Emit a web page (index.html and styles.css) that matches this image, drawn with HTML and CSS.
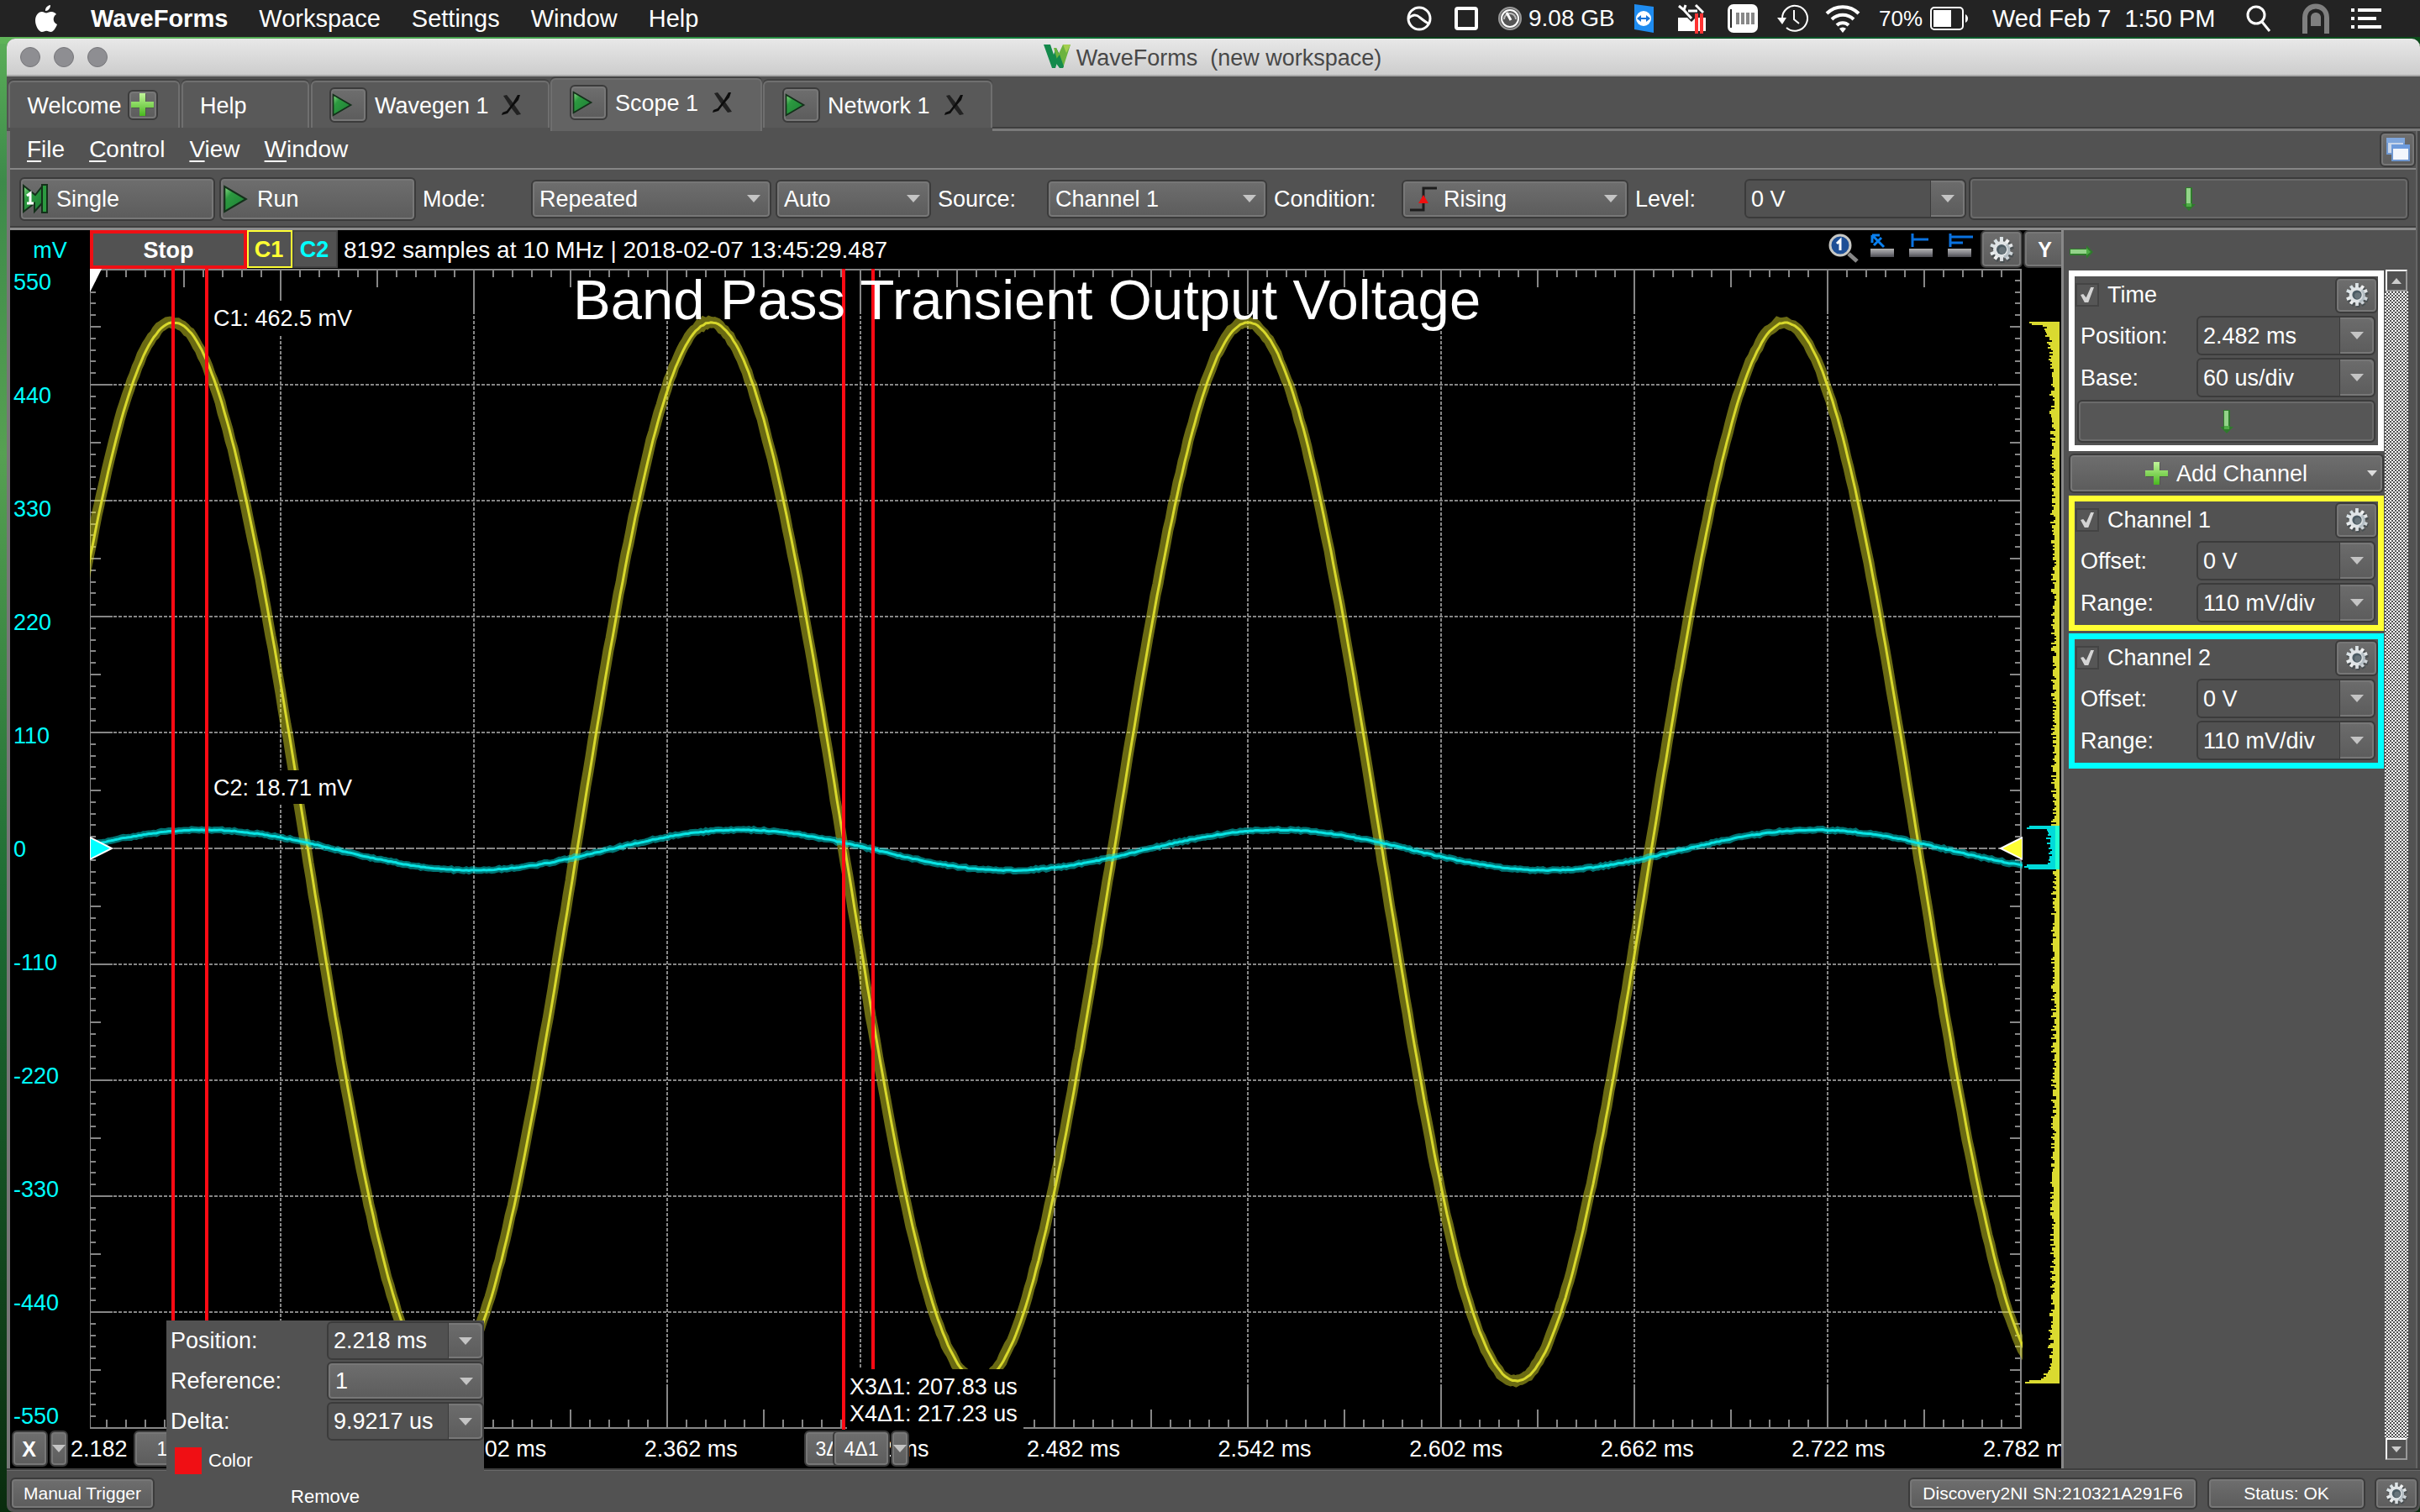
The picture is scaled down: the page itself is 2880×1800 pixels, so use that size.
FILE: index.html
```html
<!DOCTYPE html>
<html lang="en">
<head>
<meta charset="utf-8">
<title>WaveForms (new workspace)</title>
<link rel="stylesheet" href="styles.css">
</head>
<body>
<svg class="defs" aria-hidden="true">
  <defs>
    <linearGradient id="leaf" x1="0" y1="0" x2="1" y2="1"><stop offset="0" stop-color="#8ee08a"/><stop offset=".3" stop-color="#2c9a40"/><stop offset="1" stop-color="#1c7c34"/></linearGradient>
    <linearGradient id="plusfill" x1="0" y1="0" x2="0" y2="1"><stop offset="0" stop-color="#c2f59a"/><stop offset="1" stop-color="#49b81f"/></linearGradient>
    <linearGradient id="steel" x1="0" y1="0" x2="1" y2="1"><stop offset="0" stop-color="#c4d4da"/><stop offset=".5" stop-color="#f4f4f4"/><stop offset="1" stop-color="#b8c2c8"/></linearGradient>
    <linearGradient id="ruler" x1="0" y1="0" x2="0" y2="1"><stop offset="0" stop-color="#b4b4b4"/><stop offset=".5" stop-color="#85858a"/><stop offset="1" stop-color="#4c4c52"/></linearGradient>
    <symbol id="gear" viewBox="0 0 32 32">
      <g transform="translate(1 2)" stroke="#3a4448" stroke-width="5" opacity=".6"><path d="M15.900 2L16.100 30M3 10.500L29 21.500M3 21.500L29 10.500M8 4.500L24 27.500M24 4.500L8 27.500"/></g>
      <g stroke="url(#steel)" stroke-width="4"><path d="M15.900 1L16.100 30M3 10.500L29 21.500M3 21.500L29 10.500M8 4.500L24 27.500M24 4.500L8 27.500"/></g>
      <circle cx="16" cy="16" r="10" fill="#e0e4e6"/><path d="M22 10a9 9 0 0 1-3 15" fill="none" stroke="#b4bec4" stroke-width="3"/><circle cx="16" cy="16" r="6" fill="#4c5c64"/><circle cx="17" cy="17" r="4" fill="#68747a"/>
    </symbol>
    <symbol id="play" viewBox="0 0 28 32"><path d="M2 2v28L26 16z" fill="url(#leaf)" stroke="#14301a" stroke-width="2"/></symbol>
    <symbol id="plus" viewBox="0 0 28 28"><path d="M11 1h7v10h9v7h-9v9h-7v-9H1v-7h10z" fill="#3c4c34" opacity=".5"/><path d="M10 0h7v10h10v7H17v10h-7V17H0v-7h10z" fill="url(#plusfill)"/></symbol>
    <symbol id="close" viewBox="0 0 26 26"><path d="M3 2l4-1 8 10 9 13-5 1-7-9z" fill="#222"/><path d="M20 1h3l-2 6-7 8-6 8-7 2 1-3 5-2 7-9z" fill="#0c0c0c"/></symbol>
    <symbol id="down" viewBox="0 0 16 28"><path d="M4 0h8v20h4l-8 8-8-8h4z" fill="#2f7a2c"/><path d="M5 1h5v19H5z" fill="#93d389"/><path d="M5 19h6v4H5z" fill="#4fae46"/></symbol>
    <symbol id="right" viewBox="0 0 28 16"><path d="M0 4h20V0l8 8-8 8v-4H0z" fill="#2f7a2c"/><path d="M1 5h19v5H1z" fill="#93d389"/><path d="M20 3l5 5-5 4z" fill="#4fae46"/></symbol>
  </defs>
</svg>

<header class="menubar">
  <nav class="menus" aria-label="Application">
    <a href="#" class="apple" aria-label="Apple"><svg width="26" height="32" viewBox="0 0 26 32" fill="#fff"><path d="M18 0c.3 3.600-2.700 7.200-6 7 -.4-3.400 2.700-6.700 6-7zM13 9.500c1.700 0 3.300-1.700 6.300-1.600 2.400.1 4.500 1.300 5.700 3.100-5 3-4 10.200 1 12C24.300 27.600 21.500 32 18.500 32c-2.100 0-2.800-1.300-5.200-1.300S9.900 32 8 32C4.300 32 0 24.900 0 18.500 0 12.300 3.700 8.200 7.800 8.100c2.300 0 3.700 1.400 5.200 1.400z"/></svg></a>
    <a href="#" class="app">WaveForms</a><a href="#">Workspace</a><a href="#">Settings</a><a href="#">Window</a><a href="#">Help</a>
  </nav>
  <div class="tray">
    <svg class="t1" width="30" height="30" viewBox="0 0 30 30" fill="none" stroke="#fff" stroke-width="3"><circle cx="15" cy="15" r="13"/><path d="M2 15c5-5 10-5 14-1 4 3 6 5 10 7"/></svg>
    <svg class="t2" width="28" height="28" viewBox="0 0 28 28" fill="none" stroke="#fff" stroke-width="4"><rect x="2" y="2" width="24" height="24" rx="2"/></svg>
    <svg class="t3" width="28" height="28" viewBox="0 0 28 28" fill="none"><circle cx="14" cy="14" r="13" fill="#555" stroke="#999" stroke-width="2"/><circle cx="14" cy="14" r="10" stroke="#fff" stroke-width="2"/><path d="M7 15a7 7 0 0 1 14 0" stroke="#bbb" stroke-width="2"/><path d="M10 7l5 9" stroke="#fff" stroke-width="3"/></svg>
    <span class="t4">9.08 GB</span>
    <svg class="t5" width="26" height="34" viewBox="0 0 26 34"><path d="M1 0l23 3v31L1 30z" fill="#1f8cf0"/><circle cx="12" cy="17" r="9" fill="#fff"/><path d="M4 17l5-4v3h6v-3l5 4-5 4v-3H9v3z" fill="#1673d8"/></svg>
    <svg class="t6" width="34" height="36" viewBox="0 0 34 36" fill="#fff"><path d="M1 17h11l5 5 5-5h12v16H1z"/><path d="M2 3l6 5 2-6M8 8l9 10M13 9h11M22 2l9 9" stroke="#fff" stroke-width="3" fill="none"/><path d="M21 12h4v24h-4zM27 12h4v24h-4z" fill="#f33"/></svg>
    <svg class="t7" width="38" height="34" viewBox="0 0 38 34"><rect x="1" y="0" width="36" height="34" rx="7" fill="#fff"/><path d="M5 6v22" stroke="#222" stroke-width="2"/><path d="M13 10v14M19 10v14M25 10v14M31 10v14" stroke="#888" stroke-width="4"/></svg>
    <svg class="t8" width="38" height="36" viewBox="0 0 38 36" fill="none" stroke="#fff" stroke-width="2"><path d="M7 18a15 15 0 1 1 5 11M21 8v11l6 5"/><path d="M1 17h11l-5 8z" fill="#fff" stroke="none"/></svg>
    <svg class="t9" width="42" height="34" viewBox="0 0 42 34" fill="none" stroke="#fff" stroke-width="4"><path d="M2 11a27 27 0 0 1 38 0M8 18a19 19 0 0 1 26 0M14 25a10 10 0 0 1 14 0"/><path d="M17 29l4 5 4-5a6 6 0 0 0-8 0z" fill="#fff" stroke="none"/></svg>
    <span class="t10">70%</span>
    <svg class="t11" width="46" height="28" viewBox="0 0 46 28"><rect x="1" y="1" width="38" height="26" rx="4" fill="none" stroke="#fff" stroke-width="2"/><path d="M4 4h21v20H4z" fill="#fff"/><path d="M42 9c4 2 4 8 0 10z" fill="#fff"/></svg>
    <time class="t12">Wed Feb 7&nbsp; 1:50 PM</time>
    <svg class="t13" width="30" height="32" viewBox="0 0 30 32" fill="none" stroke="#fff" stroke-width="3"><circle cx="12" cy="12" r="10"/><path d="M19 20l9 11"/></svg>
    <svg class="t14" width="32" height="36" viewBox="0 0 32 36" fill="none"><path d="M3 36V17C3-1 29-1 29 17v19" stroke="#7f7f7f" stroke-width="6"/><path d="M10 27V17c0-8 12-8 12 0v10z" fill="#7f7f7f"/></svg>
    <svg class="t15" width="36" height="24" viewBox="0 0 36 24" stroke="#fff" stroke-width="4"><path d="M0 2h4M8 2h28M0 12h4M8 12h22M0 22h4M8 22h28"/></svg>
  </div>
</header>

<main class="window">
  <div class="titlebar">
    <div class="lights"><i></i><i></i><i></i></div>
    <h1><svg width="32" height="28" viewBox="0 0 32 28"><path d="M0 0h8l4 12 3-8 4 8-5 16h-4z" fill="#148a4c"/><path d="M15 4l3 7 5-11h9l-9 28h-4L12 4z" fill="#6cb33e"/><path d="M13 20l6-8 5 14-1 2h-4z" fill="#148a4c"/><path d="M23 0h9l-5 10z" fill="#a4cf50"/></svg>WaveForms&nbsp; (new workspace)</h1>
  </div>

  <div class="tabs">
    <div class="tab welcome"><button class="plain">Welcome</button><button class="btn sq" aria-label="Add instrument"><svg width="28" height="28"><use href="#plus"/></svg></button></div>
    <div class="tab help"><button class="plain">Help</button></div>
    <div class="tab wavegen"><button class="btn run" aria-label="Run Wavegen"><svg width="26" height="28"><use href="#play"/></svg></button><button class="plain">Wavegen 1</button><button class="x" aria-label="Close Wavegen"><svg width="26" height="26"><use href="#close"/></svg></button></div>
    <div class="tab scope active"><button class="btn run" aria-label="Run Scope"><svg width="26" height="28"><use href="#play"/></svg></button><button class="plain">Scope 1</button><button class="x" aria-label="Close Scope"><svg width="26" height="26"><use href="#close"/></svg></button></div>
    <div class="tab network"><button class="btn run" aria-label="Run Network"><svg width="26" height="28"><use href="#play"/></svg></button><button class="plain">Network 1</button><button class="x" aria-label="Close Network"><svg width="26" height="26"><use href="#close"/></svg></button></div>
    <div class="tabrest"></div>
  </div>

  <div class="pane">
    <nav class="submenu" aria-label="Scope">
      <a href="#"><u>F</u>ile</a><a href="#"><u>C</u>ontrol</a><a href="#"><u>V</u>iew</a><a href="#"><u>W</u>indow</a>
      <button class="btn undock" aria-label="Undock"><svg width="28" height="28" viewBox="0 0 28 28"><rect x="1" y="1" width="20" height="18" fill="#c9d6ea" stroke="#6f97cf" stroke-width="2"/><path d="M0 0h22v6H0z" fill="#7fa6dc"/><rect x="7" y="9" width="20" height="18" fill="#f2f6fc" stroke="#6f97cf" stroke-width="2"/><path d="M6 8h22v5H6z" fill="#6d9bdc"/></svg></button>
    </nav>

    <div class="toolbar">
      <button class="btn single"><svg width="30" height="36" viewBox="0 0 30 36"><path d="M1 2v31l13-10v10l9-10V3l-8 10z" fill="url(#leaf)" stroke="#14301a" stroke-width="2"/><path d="M23 1h6v33h-6z" fill="#2c9a40" stroke="#14301a" stroke-width="2"/><path d="M5 14l4-3v12M5 23h8" stroke="#fff" stroke-width="3" fill="none"/></svg>Single</button>
      <button class="btn runall"><svg width="30" height="34"><use href="#play"/></svg>Run</button>
      <label class="l1" for="mode">Mode:</label>
      <span class="select w1"><select id="mode"><option>Repeated</option></select></span>
      <span class="select w2"><select aria-label="Trigger mode"><option>Auto</option></select></span>
      <label class="l2" for="source">Source:</label>
      <span class="select w3"><select id="source"><option>Channel 1</option></select></span>
      <label class="l3" for="cond">Condition:</label>
      <span class="select w4"><svg class="edge" width="32" height="32" viewBox="0 0 32 32"><path d="M0 29h16V3h16" fill="none" stroke="#1c1c1c" stroke-width="3"/><path d="M16 11l6 10H10z" fill="#f01010"/></svg><select id="cond"><option>Rising</option></select></span>
      <label class="l4" for="level">Level:</label>
      <span class="combo w5"><input id="level" value="0 V"><button aria-label="Level values"></button></span>
      <button class="slider" aria-label="Adjust level"><svg width="16" height="28"><use href="#down"/></svg></button>
    </div>

    <div class="work">
      <section class="plot">
        <div class="unit">mV</div>
        <div class="plothead">
          <div class="state">Stop</div><button class="chan c1">C1</button><button class="chan c2">C2</button>
          <div class="info">8192 samples at 10 MHz | 2018-02-07 13:45:29.487</div>
          <div class="tools">
            <svg width="36" height="36" viewBox="0 0 36 36"><path d="M24 24l10 9" stroke="#888" stroke-width="5"/><circle cx="14" cy="14" r="12" fill="#1e4f96" stroke="#c8c8c4" stroke-width="3"/><path d="M10 12l4-4v12" stroke="#fff" stroke-width="3" fill="none"/></svg>
            <svg width="30" height="28" viewBox="0 0 30 28"><path d="M4 3l13 13M3 2h9M3 2v9M14 5l-9 9" stroke="#0a80f0" stroke-width="3"/><path d="M1 18h28v10H1z" fill="url(#ruler)"/></svg>
            <svg width="30" height="28" viewBox="0 0 30 28"><path d="M5 0v16M5 7h19" stroke="#0a72e0" stroke-width="3"/><path d="M1 18h28v10H1z" fill="url(#ruler)"/></svg>
            <svg width="32" height="28" viewBox="0 0 32 28"><path d="M4 0v16M4 4h27M4 11h15" stroke="#0a72e0" stroke-width="3"/><path d="M1 18h28v10H1z" fill="url(#ruler)"/></svg>
          </div>
          <button class="btn plotgear" aria-label="Plot options"><svg width="32" height="34"><use href="#gear"/></svg></button>
        </div>
        <button class="btn ybtn">Y</button>

        <div class="yaxis"><span>550</span><span>440</span><span>330</span><span>220</span><span>110</span><span>0</span><span>-110</span><span>-220</span><span>-330</span><span>-440</span><span>-550</span></div>
        <div class="graph" id="graph">
          <h2 class="caption">Band Pass Transient Output Voltage</h2>
          <div class="note n1">C1: 462.5 mV</div>
          <div class="note n2">C2: 18.71 mV</div>
          <div class="note n3">X3Δ1: 207.83 us<br>X4Δ1: 217.23 us</div>
        </div>
        <div class="hist" id="hist"></div>

        <div class="xaxis">
          <div class="ticks"><span>2.182 ms</span><span>2.242 ms</span><span>2.302 ms</span><span>2.362 ms</span><span>2.422 ms</span><span>2.482 ms</span><span>2.542 ms</span><span>2.602 ms</span><span>2.662 ms</span><span>2.722 ms</span><span>2.782 ms</span></div>
          <button class="btn xb">X</button><button class="btn drop xd" aria-label="Add X cursor"></button>
          <button class="btn cur k1">1</button><button class="btn cur k3">3Δ1</button><button class="btn cur k4">4Δ1</button><button class="btn drop kd" aria-label="Cursor options"></button>
        </div>
      </section>

      <aside class="side">
        <div class="sidehead"><svg width="28" height="16"><use href="#right"/></svg></div>
        <div class="sidebody">
          <div class="panels">
            <fieldset class="box time">
              <div class="boxhead"><label><input type="checkbox" checked>Time</label><button class="btn gearbtn" aria-label="Time options"><svg width="30" height="32"><use href="#gear"/></svg></button></div>
              <div class="row"><label for="tp">Position:</label><span class="combo"><input id="tp" value="2.482 ms"><button aria-label="Position values"></button></span></div>
              <div class="row"><label for="tb">Base:</label><span class="combo"><input id="tb" value="60 us/div"><button aria-label="Base values"></button></span></div>
              <button class="slider" aria-label="Adjust time"><svg width="16" height="28"><use href="#down"/></svg></button>
            </fieldset>
            <button class="btn addch"><svg width="28" height="28"><use href="#plus"/></svg>Add Channel</button>
            <fieldset class="box ch1">
              <div class="boxhead"><label><input type="checkbox" checked>Channel 1</label><button class="btn gearbtn" aria-label="Channel 1 options"><svg width="30" height="32"><use href="#gear"/></svg></button></div>
              <div class="row"><label for="o1">Offset:</label><span class="combo"><input id="o1" value="0 V"><button aria-label="Offset values"></button></span></div>
              <div class="row"><label for="r1">Range:</label><span class="combo"><input id="r1" value="110 mV/div"><button aria-label="Range values"></button></span></div>
            </fieldset>
            <fieldset class="box ch2">
              <div class="boxhead"><label><input type="checkbox" checked>Channel 2</label><button class="btn gearbtn" aria-label="Channel 2 options"><svg width="30" height="32"><use href="#gear"/></svg></button></div>
              <div class="row"><label for="o2">Offset:</label><span class="combo"><input id="o2" value="0 V"><button aria-label="Offset values"></button></span></div>
              <div class="row"><label for="r2">Range:</label><span class="combo"><input id="r2" value="110 mV/div"><button aria-label="Range values"></button></span></div>
            </fieldset>
          </div>
          <div class="scroll"><button class="up" aria-label="Scroll up"></button><div class="track"></div><button class="dn" aria-label="Scroll down"></button></div>
        </div>
      </aside>
    </div>
  </div>

  <footer class="status">
    <button class="btn manual">Manual Trigger</button>
    <button class="btn device">Discovery2NI SN:210321A291F6</button>
    <button class="btn ok">Status: OK</button>
    <button class="btn sgear" aria-label="Device options"><svg width="28" height="30"><use href="#gear"/></svg></button>
  </footer>

  <div class="popup">
    <div class="row"><label for="cp">Position:</label><span class="combo"><input id="cp" value="2.218 ms"><button aria-label="Position values"></button></span></div>
    <div class="row"><label for="cr">Reference:</label><span class="select"><select id="cr"><option>1</option></select></span></div>
    <div class="row"><label for="cd">Delta:</label><span class="combo"><input id="cd" value="9.9217 us"><button aria-label="Delta values"></button></span></div>
    <button class="color"><i></i>Color</button>
    <button class="remove">Remove</button>
  </div>
</main>
<script src="plot.js"></script>
</body>
</html>
```
FILE: styles.css
```css
* { box-sizing: border-box; }
body {
  margin: 0; height: 100vh; display: flex; flex-direction: column; overflow: hidden;
  font: 27px/32px "Liberation Sans", Arial, sans-serif; color: #fff;
  background:
    linear-gradient(90deg, #5fb458, #3d9a4a 25%, #0c7a38 40%, #073a18 60%, #0a5a2c 80%, #0c4a1a) 0 44px / 100% 8px no-repeat,
    linear-gradient(#63b85c, #3d8a4a 12%, #56a052 30%, #1d6b33 60%, #0a2c0e);
}
button, input, select { font: inherit; color: inherit; margin: 0; padding: 0; border: 0; background: none; border-radius: 0; outline: 0; }
button { display: flex; align-items: center; justify-content: center; white-space: nowrap; }
a { color: inherit; text-decoration: none; }
svg { display: block; flex: none; }
.defs { position: absolute; width: 0; height: 0; }

.menubar { height: 44px; flex: none; background: #232323; display: flex; justify-content: space-between; align-items: center; font-size: 29px; }
.menus { display: flex; gap: 37px; padding-left: 42px; align-items: center; }
.menus .app { font-weight: bold; margin-left: 3px; }
.tray { display: flex; align-items: center; padding-right: 46px; font-size: 28px; white-space: nowrap; }
.t2 { margin-left: 27px; } .t3 { margin-left: 24px; } .t4 { margin-left: 8px; width: 100px; }
.t5 { margin-left: 25px; } .t6 { margin-left: 26px; } .t7 { margin-left: 25px; } .t8 { margin-left: 21px; }
.t9 { margin-left: 20px; } .t10 { margin-left: 22px; font-size: 26px; width: 54px; } .t11 { margin-left: 7px; }
.t12 { margin-left: 28px; width: 266px; font-size: 29px; } .t13 { margin-left: 36px; } .t14 { margin-left: 37px; } .t15 { margin-left: 26px; }

.window { position: relative; flex: 1; min-height: 0; margin: 2px 0 0 8px; background: #525252; border-radius: 10px 10px 8px 8px; display: flex; flex-direction: column; }
.titlebar { height: 45px; flex: none; position: relative; display: flex; align-items: center; background: linear-gradient(#e8e8e8, #cdcdcd); border-bottom: 2px solid #a8a8a8; border-radius: 10px 10px 0 0; }
.lights { position: absolute; left: 16px; display: flex; gap: 16px; }
.lights i { width: 24px; height: 24px; border-radius: 50%; background: #8e8e92; border: 1px solid #77777b; }
h1 { margin: 0 auto; font-size: 27px; font-weight: normal; color: #484848; display: flex; gap: 7px; padding: 2px 2px 0 0; }

.btn { border: 2px solid #3b3b3b; border-radius: 6px; background: linear-gradient(#6e6e6e, #5c5c5c); box-shadow: inset 0 0 0 2px #777; }
.tabs { flex: none; height: 65px; display: flex; align-items: flex-end; padding-left: 2px; }
.tab { height: 56px; margin-bottom: 4px; border: 2px solid #6f6f6f; border-bottom: 0; border-radius: 6px 6px 0 0; background: #595959; display: flex; align-items: center; box-shadow: 0 -2px 0 #424242; }
.tab.active { height: 63px; margin-bottom: 0; background: #636363; padding-bottom: 8px; }
.tab .plain { margin-left: 9px; padding-top: 2px; }
.welcome { width: 204px; margin-right: 2px; } .tab.welcome .plain { margin-left: 19px; width: 115px; }
.help { width: 152px; margin-right: 2px; } .tab.help .plain { margin-left: 20px; }
.wavegen { width: 284px; margin-right: 1px; padding-left: 20px; } .wavegen .x { margin-left: 14px; }
.scope { width: 252px; margin-right: 1px; padding-left: 21px; } .scope .x { margin-left: 16px; }
.network { width: 273px; padding-left: 21px; } .network .x { margin-left: 16px; }
.btn.sq { width: 36px; height: 36px; margin-left: 6px; }
.btn.run { width: 45px; height: 42px; justify-content: flex-start; }
.tabrest { flex: 1; height: 5px; border-top: 2px solid #3e3e3e; border-bottom: 3px solid #7a7a7a; }

.pane { flex: 1; min-height: 0; display: flex; flex-direction: column; border-left: 4px solid #777; border-right: 3px solid #444; box-shadow: inset -2px 0 #666; }
.submenu { flex: none; height: 46px; display: flex; align-items: center; gap: 29px; padding: 0 0 0 20px; border-bottom: 2px solid #858585; margin-right: 2px; font-size: 28px; }
.submenu u { text-decoration-thickness: 2px; text-underline-offset: 4px; }
.undock { margin-left: auto; width: 43px; height: 42px; }
.toolbar { flex: none; height: 72px; display: flex; align-items: center; padding: 0 8px 0 11px; border-bottom: 3px solid #8c8c8c; box-shadow: inset 0 -2px #3e3e3e; margin-right: 2px; }
.single, .runall { width: 233px; height: 52px; justify-content: flex-start; gap: 10px; padding-left: 2px; margin-right: 5px; }
.runall { width: 234px; margin-right: 0; gap: 11px; }
.toolbar label { padding-left: 8px; flex: none; }
.l1 { width: 137px; } .l2 { width: 138px; } .l3 { width: 160px; } .l4 { width: 138px; }
.toolbar .w1 { width: 286px; margin-right: 5px; } .toolbar .w2 { width: 185px; } .toolbar .w3 { width: 262px; } .toolbar .w4 { width: 270px; } .toolbar .w5 { width: 264px; margin-right: 3px; }
.toolbar .slider { flex: 1; }

.select { position: relative; flex: none; display: flex; align-items: center; height: 46px; border: 2px solid #3b3b3b; border-radius: 6px; background: linear-gradient(#6e6e6e, #5c5c5c); box-shadow: inset 0 0 0 2px #777; }
.select select { flex: 1; min-width: 0; appearance: none; padding-left: 8px; height: 42px; }
.select::after { content: ""; margin-right: 11px; border: 8px solid transparent; border-top: 9px solid #c4c4c4; border-bottom: 0; }
.edge { margin-left: 8px; }
.combo { flex: none; display: flex; height: 47px; border: 2px solid #3b3b3b; border-radius: 6px; background: #515151; }
.combo input { flex: 1; min-width: 0; width: 0; padding: 0 0 0 6px; }
.combo button { width: 41px; border-left: 1px solid #3b3b3b; border-radius: 0 5px 5px 0; background: linear-gradient(#6c6c6c, #5c5c5c); box-shadow: inset -2px 2px #777, inset 0 -2px #777; }
.combo button::after, .drop::after { content: ""; border: 8px solid transparent; border-top: 9px solid #c4c4c4; border-bottom: 0; }
.slider { height: 51px; border: 2px solid #3b3b3b; border-radius: 6px; background: #565656; box-shadow: inset 0 0 0 2px #6a6a6a; }

.work { flex: 1; min-height: 0; display: flex; }
.plot { flex: 1; min-width: 0; overflow: hidden; background: #000; display: grid; grid-template: 46px minmax(0, 1fr) 46px / 95px minmax(0, 1fr) 46px; }
.unit { color: #0ff; text-align: center; line-height: 48px; padding: 0 12px 0 12px; }
.plothead { display: flex; align-items: stretch; }
.state { width: 187px; border: 4px solid #f00f14; background: #525252; font-weight: bold; text-align: center; line-height: 40px; }
.chan { width: 54px; background: #525252; font-weight: bold; margin-bottom: 1px; padding-right: 2px; }
.c1 { color: #ff3; border: 2px solid #ff3; } .c2 { color: #0ff; border: 2px solid #444; }
.info { margin-left: 7px; font-size: 28px; line-height: 48px; white-space: nowrap; }
.tools { margin-left: auto; display: flex; gap: 16px; align-items: flex-start; padding-top: 4px; margin-right: 8px; }
.tools svg:first-child { margin-right: -3px; }
.plotgear { width: 50px; margin-bottom: 1px; }
.ybtn { font-weight: bold; margin: 0 -6px 1px 1px; font-size: 25px; }
.yaxis { color: #0ff; display: flex; flex-direction: column; justify-content: space-between; padding-left: 4px; }
.graph { position: relative; overflow: hidden; }
.graph svg, .hist svg { position: absolute; left: 0; top: 0; width: 100%; height: 100%; }
.hist { position: relative; }
.caption { position: absolute; z-index: 1; left: 25%; top: 0; margin: 0; font-size: 67px; line-height: 74px; font-weight: normal; white-space: nowrap; }
.note { position: absolute; z-index: 1; background: #000; white-space: nowrap; }
.n1, .n2 { left: 141px; padding: 5px 4px 3px 6px; width: 184px; height: 40px; }
.n1 { top: 38px; } .n2 { top: 597px; }
.n3 { left: 901px; bottom: 0; width: 210px; height: 72px; padding: 5px 0 3px 3px; }
.xaxis { grid-column: 1 / -1; position: relative; }
.ticks { display: flex; justify-content: space-between; margin: 0 -18px 0 72px; line-height: 46px; white-space: nowrap; }
.xaxis .btn { position: absolute; top: 1px; height: 43px; }
.xaxis .xb { left: 2px; width: 43px; font-weight: bold; font-size: 25px; padding-right: 2px; }
.xaxis .drop { width: 22px; } .xaxis .xd { left: 47px; } .xaxis .kd { left: 1048px; }
.cur { font-size: 23px; width: 68px; }
.xaxis .k1 { left: 147px; } .xaxis .k3 { left: 945px; } .xaxis .k4 { left: 979px; }

.side { width: 424px; flex: none; border-left: 3px solid #888; display: flex; flex-direction: column; }
.sidehead { height: 47px; padding: 18px 0 0 7px; flex: none; }
.sidebody { flex: 1; min-height: 0; display: flex; justify-content: space-between; padding: 0 11px 10px 6px; gap: 1px; }
.panels { flex: 1; display: flex; flex-direction: column; gap: 3px; padding-top: 1px; }
.box { margin: 0; min-width: 0; border: 7px solid #fff; padding: 0 3px 3px 1px; display: flex; flex-direction: column; gap: 3px; }
.ch1 { border-color: #ff3; } .ch2 { border-color: #0ff; }
.boxhead { height: 44px; display: flex; align-items: center; justify-content: space-between; margin-right: -3px; }
.boxhead label { display: flex; align-items: center; gap: 10px; }
.boxhead input { appearance: none; width: 28px; height: 28px; border: 2px solid #444; background: #565656; display: grid; place-items: center; }
.boxhead input::after { content: ""; width: 16px; height: 18px; background: #d4d4d4; clip-path: polygon(0 50%, 20% 44%, 42% 68%, 76% 0, 100% 0, 58% 100%, 30% 100%); }
.gearbtn { width: 51px; height: 43px; }
.row { display: flex; align-items: center; justify-content: space-between; }
.side .row { padding-left: 6px; }
.side .combo { width: 213px; }
.box .slider { margin-left: 2px; }
.addch { height: 47px; gap: 9px; position: relative; }
.addch::after { content: ""; position: absolute; right: 6px; border: 6px solid transparent; border-top: 7px solid #ddd; border-bottom: 0; }
.scroll { width: 28px; display: flex; flex-direction: column; }
.track { flex: 1; background: repeating-conic-gradient(#fff 0 25%, #525252 0 50%) 0 0 / 4px 4px; }
.up, .dn { height: 26px; border: 2px solid #fff; border-right-color: #999; border-bottom-color: #999; margin: 0 1px; }
.up::after, .dn::after { content: ""; border: 6px solid transparent; border-bottom: 7px solid #ccc; border-top: 0; }
.dn::after { border-bottom: 0; border-top: 7px solid #ccc; }

.status { flex: none; height: 52px; display: flex; align-items: center; border-top: 2px solid #3e3e3e; box-shadow: inset 0 1px #6a6a6a; padding: 6px 2px 0 4px; font-size: 21px; }
.status .btn { height: 38px; }
.manual { width: 172px; margin-right: auto; } .device { width: 344px; margin-right: 12px; } .ok { width: 188px; margin-right: 11px; } .sgear { width: 52px; }

.popup { position: absolute; z-index: 2; left: 190px; bottom: 0; width: 378px; height: 228px; background: #525252; padding: 1px 0 0 5px; display: flex; flex-direction: column; gap: 2px; }
.popup .combo, .popup .select { width: 187px; height: 46px; }
.color, .remove { font-size: 22px; line-height: 32px; }
.color { align-self: flex-start; gap: 8px; margin: 6px 0 0 5px; }
.color i { width: 32px; height: 32px; background: #f00f14; }
.remove { margin-top: 9px; padding-right: 5px; }
```
FILE: plot.js
```js
(function () {
  var NS = "http://www.w3.org/2000/svg";
  var GRID = "#868686";

  function svg(host) {
    var old = host.querySelector("svg");
    if (old) old.remove();
    var s = document.createElementNS(NS, "svg");
    host.prepend(s);
    return s;
  }
  function add(parent, tag, attrs) {
    var e = document.createElementNS(NS, tag);
    for (var k in attrs) e.setAttribute(k, attrs[k]);
    parent.appendChild(e);
    return e;
  }
  function noise(i) {
    var v = Math.sin(i * 127.1) * 43758.5453;
    return v - Math.floor(v);
  }

  function drawGraph() {
    var host = document.getElementById("graph");
    var w = host.clientWidth, h = host.clientHeight;
    var s = svg(host);
    var right = w - 2, left = -3, bottom = h - 2;
    var dx = (right - left) / 10, dy = bottom / 10;
    var fine = "", mid = "", solid = "", i, x, y, n;

    for (i = 1; i < 10; i++) {
      x = Math.round(left + i * dx); y = Math.round(i * dy);
      if (i === 5) mid += "M" + x + " 50V" + (bottom - 50) + "M28 " + y + "H" + (right - 30);
      else fine += "M" + x + " 50V" + (bottom - 50) + "M28 " + y + "H" + (right - 30);
    }
    for (i = 1; i < 100; i++) {
      x = Math.round(left + i * dx / 10); y = Math.round(i * dy / 10);
      n = i % 10 === 0 ? 50 : i % 5 === 0 ? 22 : 10;
      solid += "M" + x + " 0v" + n + "M" + x + " " + bottom + "v" + -n;
      n = i % 10 === 0 ? 27 : i % 5 === 0 ? 13 : 7;
      solid += "M0 " + y + "h" + n + "M" + right + " " + y + "h" + -n;
    }
    add(s, "path", { d: fine, stroke: GRID, "stroke-width": 2, "stroke-dasharray": "4 2" });
    add(s, "path", { d: mid, stroke: GRID, "stroke-width": 2, "stroke-dasharray": "10 2" });
    add(s, "path", { d: solid, stroke: GRID, "stroke-width": 2 });
    add(s, "path", { d: "M0 1H" + right + "V" + bottom + "H0z", fill: "none", stroke: GRID, "stroke-width": 2 });

    var period = dx * 2.778;
    function wave(peak, centre, amp, shift, jitter) {
      var d = "";
      for (var px = -8; px <= w + 8; px += 3) {
        var yy = centre - amp * Math.cos((px - peak) / period * 2 * Math.PI) + (noise(px) - 0.5) * jitter;
        d += (d ? "L" : "M") + (px + shift) + " " + yy.toFixed(1);
      }
      return d;
    }
    var c1 = [dx * 0.435, bottom / 2 + 4, dy * 4.565];
    var c2 = [dx * 0.59, bottom / 2 + 2, dy * 0.174];
    function trace(d, colour, width) {
      add(s, "path", { d: d, fill: "none", stroke: colour, "stroke-width": width });
    }
    trace(wave(c1[0], c1[1], c1[2], -2, 3), "rgba(226,226,40,.47)", 13);
    trace(wave(c1[0], c1[1], c1[2], 0, 1), "#d8d82c", 3);
    trace(wave(c2[0], c2[1], c2[2], 0, 2), "rgba(0,230,230,.5)", 8);
    trace(wave(c2[0], c2[1], c2[2], 0, 1), "#08e4e4", 3);

    [0.0431, 0.0605, 0.3902, 0.405].forEach(function (f) {
      add(s, "path", { d: "M" + Math.round(w * f) + " 0V" + h, stroke: "#ff0a14", "stroke-width": 4 });
    });
    add(s, "path", { d: "M0 0H14L0 28z", fill: "#fff" });
    y = bottom / 2;
    add(s, "path", { d: "M0 " + (y - 13) + "L26 " + y + "L0 " + (y + 13) + "z", fill: "#0ff", stroke: "#fff", "stroke-width": 2 });
    add(s, "path", { d: "M" + w + " " + (y - 13) + "L" + (w - 26) + " " + y + "L" + w + " " + (y + 13) + "z", fill: "#ff3", stroke: "#fff", "stroke-width": 2 });
  }

  function drawHistogram() {
    var host = document.getElementById("hist");
    var h = host.clientHeight, s = svg(host), edge = 44;
    function bars(from, to, floor, spread, peak, colour) {
      var d = "", c = (from + to) / 2, r = (to - from) / 2;
      for (var y = from; y < to; y += 2) {
        var t = Math.min(0.9999, Math.abs(y + 1 - c) / r);
        var len = Math.min(peak, floor + spread / Math.sqrt(1 - t * t)) + Math.round(noise(y) * 3 - 1) * 2;
        if (y < from + 4 || y > to - 6) len = peak - noise(y) * 10;
        d += "M" + edge + " " + (y + 1) + "h" + -Math.round(len);
      }
      add(s, "path", { d: d, stroke: colour, "stroke-width": 2 });
    }
    bars(Math.round(h * 0.0456), Math.round(h * 0.96), 4, 2, 42, "#dada30");
    bars(Math.round(h * 0.4795), Math.round(h * 0.517), 5, 6, 42, "#00dada");
    add(s, "rect", { x: edge - 5, y: Math.round(h * 0.4795), width: 5, height: Math.round(h * 0.0375), fill: "#20ffd0" });
  }

  function draw() { drawGraph(); drawHistogram(); }
  draw();
  window.addEventListener("resize", draw);
})();
```
